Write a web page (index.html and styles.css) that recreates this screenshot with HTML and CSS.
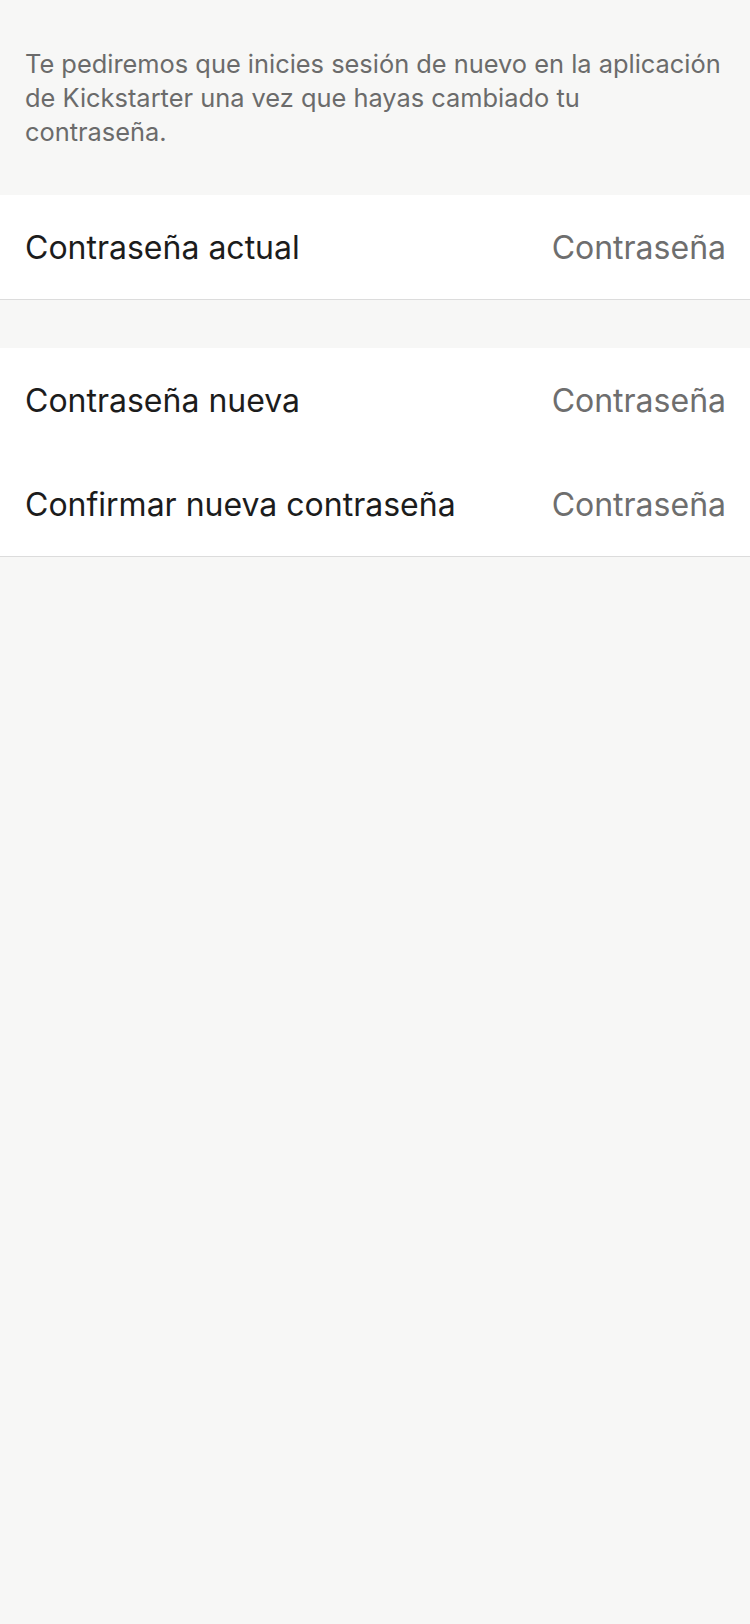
FILE: index.html
```html
<!DOCTYPE html>
<html lang="es">
<head>
<meta charset="utf-8">
<link rel="stylesheet" href="styles.css">
</head>
<body>
<div class="page">
  <p class="note">Te pediremos que inicies sesión de nuevo en la aplicación de Kickstarter una vez que hayas cambiado tu contraseña.</p>
  <section class="group">
    <div class="row"><span class="label">Contraseña actual</span><span class="ph">Contraseña</span></div>
  </section>
  <div class="gap"></div>
  <section class="group">
    <div class="row"><span class="label">Contraseña nueva</span><span class="ph">Contraseña</span></div>
    <div class="row"><span class="label">Confirmar nueva contraseña</span><span class="ph">Contraseña</span></div>
  </section>
</div>
</body>
</html>
```
FILE: styles.css
```css
html, body {
  margin: 0;
  padding: 0;
  background: #f7f7f6;
}
body {
  font-family: Inter, "Liberation Sans", sans-serif;
  min-height: 1624px;
}
.page {
  display: flex;
  flex-direction: column;
}
.note {
  margin: 0;
  padding: 47px 25px 46px 25px;
  font-size: 25.4px;
  line-height: 34px;
  color: #6b6b6b;
}
.group {
  background: #ffffff;
  border-bottom: 1px solid #dcdcdc;
  display: flex;
  flex-direction: column;
}
.row {
  height: 104px;
  display: flex;
  align-items: center;
  justify-content: space-between;
  padding: 0 24px 0 25px;
  font-size: 32px;
}
.label {
  color: #1c1c1c;
}
.ph {
  color: #6e6e6e;
}
.gap {
  height: 48px;
}
```
